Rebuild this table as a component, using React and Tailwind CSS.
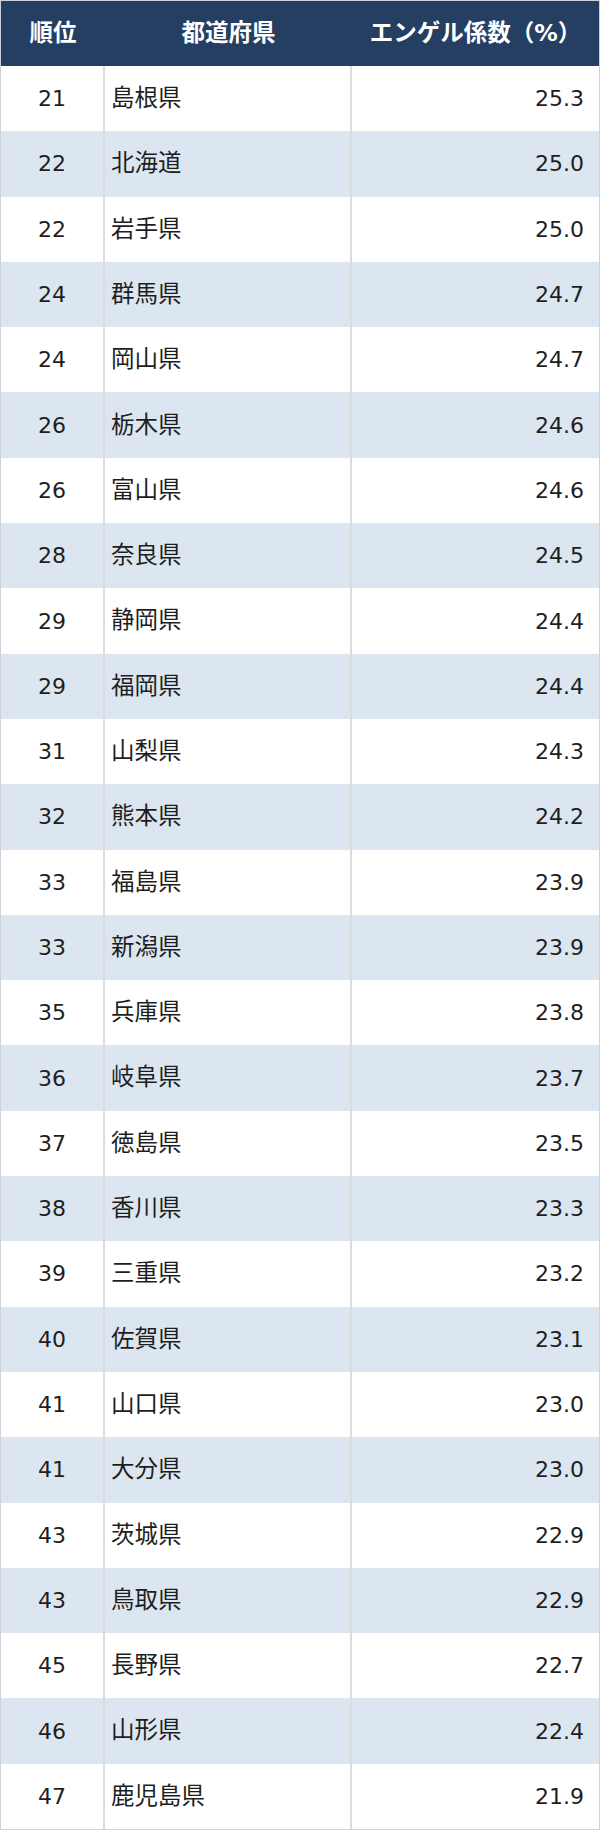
// エンゲル係数ランキング（21〜47位）
const rows = [
  ["21", "島根県", "25.3"],
  ["22", "北海道", "25.0"],
  ["22", "岩手県", "25.0"],
  ["24", "群馬県", "24.7"],
  ["24", "岡山県", "24.7"],
  ["26", "栃木県", "24.6"],
  ["26", "富山県", "24.6"],
  ["28", "奈良県", "24.5"],
  ["29", "静岡県", "24.4"],
  ["29", "福岡県", "24.4"],
  ["31", "山梨県", "24.3"],
  ["32", "熊本県", "24.2"],
  ["33", "福島県", "23.9"],
  ["33", "新潟県", "23.9"],
  ["35", "兵庫県", "23.8"],
  ["36", "岐阜県", "23.7"],
  ["37", "徳島県", "23.5"],
  ["38", "香川県", "23.3"],
  ["39", "三重県", "23.2"],
  ["40", "佐賀県", "23.1"],
  ["41", "山口県", "23.0"],
  ["41", "大分県", "23.0"],
  ["43", "茨城県", "22.9"],
  ["43", "鳥取県", "22.9"],
  ["45", "長野県", "22.7"],
  ["46", "山形県", "22.4"],
  ["47", "鹿児島県", "21.9"],
];

export default function App() {
  return (
    <div
      className="flex h-[1830px] w-[600px] flex-col border border-[#cfd3d8] bg-white text-[#1e1e1e]"
      style={{ fontFamily: '"DejaVu Sans", "Noto Sans CJK JP", sans-serif' }}
    >
      <div className="grid h-[65px] shrink-0 grid-cols-[104px_247px_1fr] bg-[#243f62] text-[23.5px] font-bold text-white">
        <div className="flex items-center justify-center">順位</div>
        <div className="flex items-center justify-center">都道府県</div>
        <div className="flex items-center justify-center">エンゲル係数（%）</div>
      </div>
      {rows.map(([rank, name, value], i) => (
        <div
          key={i}
          className={
            "grid flex-1 grid-cols-[104px_247px_1fr] text-[22px] " +
            (i % 2 === 1 ? "bg-[#dce6f1]" : "bg-white")
          }
        >
          <div className="flex items-center justify-center border-r-2 border-[#dcdcdc]">{rank}</div>
          <div className="flex items-center border-r-2 border-[#dcdcdc] pl-[6px] text-[23.5px]">{name}</div>
          <div className="flex items-center justify-end pr-[15px]">{value}</div>
        </div>
      ))}
    </div>
  );
}
